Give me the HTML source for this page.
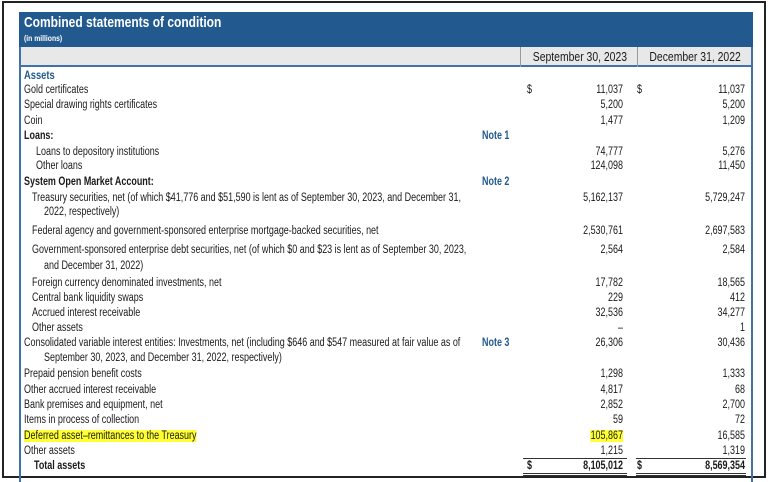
<!DOCTYPE html>
<html><head><meta charset="utf-8"><style>
*{margin:0;padding:0;box-sizing:border-box}
body{width:768px;height:480px;background:#fff;position:relative;overflow:hidden;font-family:"Liberation Sans",sans-serif;font-size:11.5px;color:#1a1a1a}
.frame{position:absolute;left:2px;top:1px;width:764px;height:477px;border:2px solid #222}
.panel{position:absolute;left:19px;top:12px;width:734px;height:470px;border-left:2px solid #3f72a6;border-right:2px solid #3f72a6}
.hdr{position:absolute;left:19px;top:12px;width:734px;height:35px;background:#225a8f}
.hdr .t{position:absolute;left:5px;top:2px;color:#fff;font-weight:bold;font-size:15px;transform:scaleX(.8);transform-origin:left;white-space:nowrap}
.hdr .s{position:absolute;left:5px;top:22px;color:#fff;font-weight:bold;font-size:8px;transform:scaleX(.85);transform-origin:left;white-space:nowrap}
.ch{position:absolute;left:21px;top:47px;width:730px;height:20px;background:#e8e8e8;border-bottom:2px solid #3f72a6}
.ch div{position:absolute;top:0;height:20px;line-height:20px;text-align:center;font-size:13px;border-left:1px solid #999;white-space:nowrap}
.ch span{display:inline-block;transform:scaleX(.8)}
.r,.d,.n{transform:scaleX(.78)}
.r{position:absolute;left:24px;white-space:nowrap;line-height:14px;transform-origin:left}
.b{font-weight:bold}
.blue{color:#225a8f;font-weight:bold}
.n{position:absolute;text-align:right;width:100px;line-height:14px;transform-origin:right;white-space:nowrap}
.c1{left:523px}.c2{left:645px}
.d{position:absolute;line-height:14px;transform-origin:left;white-space:nowrap}
.hl{background:#ffff33}
</style></head><body>
<div class="frame"></div>
<div class="panel"></div>
<div class="hdr"><div class="t">Combined statements of condition</div><div class="s">(in millions)</div></div>
<div class="ch"><div style="left:499px;width:117px"><span>September 30, 2023</span></div><div style="left:616px;width:114px"><span>December 31, 2022</span></div></div>

<div class="r blue" style="top:68px;font-size:12px">Assets</div>
<div class="r" style="top:83px">Gold certificates</div><div class="d" style="left:527px;top:83px">$</div><div class="n c1" style="top:83px">11,037</div><div class="d" style="left:637px;top:83px">$</div><div class="n c2" style="top:83px">11,037</div>
<div class="r" style="top:98px">Special drawing rights certificates</div><div class="n c1" style="top:98px">5,200</div><div class="n c2" style="top:98px">5,200</div>
<div class="r" style="top:114px">Coin</div><div class="n c1" style="top:114px">1,477</div><div class="n c2" style="top:114px">1,209</div>
<div class="r b" style="top:129px">Loans:</div><div class="d blue" style="left:482px;top:129px">Note 1</div>
<div class="r" style="top:145px;left:36px">Loans to depository institutions</div><div class="n c1" style="top:145px">74,777</div><div class="n c2" style="top:145px">5,276</div>
<div class="r" style="top:159px;left:36px">Other loans</div><div class="n c1" style="top:159px">124,098</div><div class="n c2" style="top:159px">11,450</div>
<div class="r b" style="top:175px">System Open Market Account:</div><div class="d blue" style="left:482px;top:175px">Note 2</div>
<div class="r" style="top:191px;left:32px">Treasury securities, net (of which $41,776 and $51,590 is lent as of September 30, 2023, and December 31,</div><div class="n c1" style="top:191px">5,162,137</div><div class="n c2" style="top:191px">5,729,247</div>
<div class="r" style="top:205px;left:44px">2022, respectively)</div>
<div class="r" style="top:224px;left:32px">Federal agency and government-sponsored enterprise mortgage-backed securities, net</div><div class="n c1" style="top:224px">2,530,761</div><div class="n c2" style="top:224px">2,697,583</div>
<div class="r" style="top:243px;left:32px">Government-sponsored enterprise debt securities, net (of which $0 and $23 is lent as of September 30, 2023,</div><div class="n c1" style="top:243px">2,564</div><div class="n c2" style="top:243px">2,584</div>
<div class="r" style="top:259px;left:44px">and December 31, 2022)</div>
<div class="r" style="top:276px;left:32px">Foreign currency denominated investments, net</div><div class="n c1" style="top:276px">17,782</div><div class="n c2" style="top:276px">18,565</div>
<div class="r" style="top:291px;left:32px">Central bank liquidity swaps</div><div class="n c1" style="top:291px">229</div><div class="n c2" style="top:291px">412</div>
<div class="r" style="top:306px;left:32px">Accrued interest receivable</div><div class="n c1" style="top:306px">32,536</div><div class="n c2" style="top:306px">34,277</div>
<div class="r" style="top:321px;left:32px">Other assets</div><div class="n c1" style="top:321px">–</div><div class="n c2" style="top:321px">1</div>
<div class="r" style="top:336px">Consolidated variable interest entities: Investments, net (including $646 and $547 measured at fair value as of</div><div class="d blue" style="left:482px;top:336px">Note 3</div><div class="n c1" style="top:336px">26,306</div><div class="n c2" style="top:336px">30,436</div>
<div class="r" style="top:351px;left:44px">September 30, 2023, and December 31, 2022, respectively)</div>
<div class="r" style="top:367px">Prepaid pension benefit costs</div><div class="n c1" style="top:367px">1,298</div><div class="n c2" style="top:367px">1,333</div>
<div class="r" style="top:383px">Other accrued interest receivable</div><div class="n c1" style="top:383px">4,817</div><div class="n c2" style="top:383px">68</div>
<div class="r" style="top:398px">Bank premises and equipment, net</div><div class="n c1" style="top:398px">2,852</div><div class="n c2" style="top:398px">2,700</div>
<div class="r" style="top:413px">Items in process of collection</div><div class="n c1" style="top:413px">59</div><div class="n c2" style="top:413px">72</div>
<div class="r" style="top:429px"><span class="hl">Deferred asset–remittances to the Treasury</span></div><div class="n c1" style="top:429px"><span class="hl">105,867</span></div><div class="n c2" style="top:429px">16,585</div>
<div class="r" style="top:444px">Other assets</div><div class="n c1" style="top:444px">1,215</div><div class="n c2" style="top:444px">1,319</div>
<div style="position:absolute;left:523px;top:458px;width:104px;border-top:1px solid #333"></div>
<div style="position:absolute;left:636px;top:458px;width:110px;border-top:1px solid #333"></div>
<div class="r b" style="top:459px;left:34px">Total assets</div>
<div class="d b" style="left:527px;top:459px">$</div><div class="n c1 b" style="top:459px">8,105,012</div>
<div class="d b" style="left:637px;top:459px">$</div><div class="n c2 b" style="top:459px">8,569,354</div>
<div style="position:absolute;left:523px;top:473px;width:104px;border-top:3px double #333"></div>
<div style="position:absolute;left:636px;top:473px;width:110px;border-top:3px double #333"></div>
</body></html>
